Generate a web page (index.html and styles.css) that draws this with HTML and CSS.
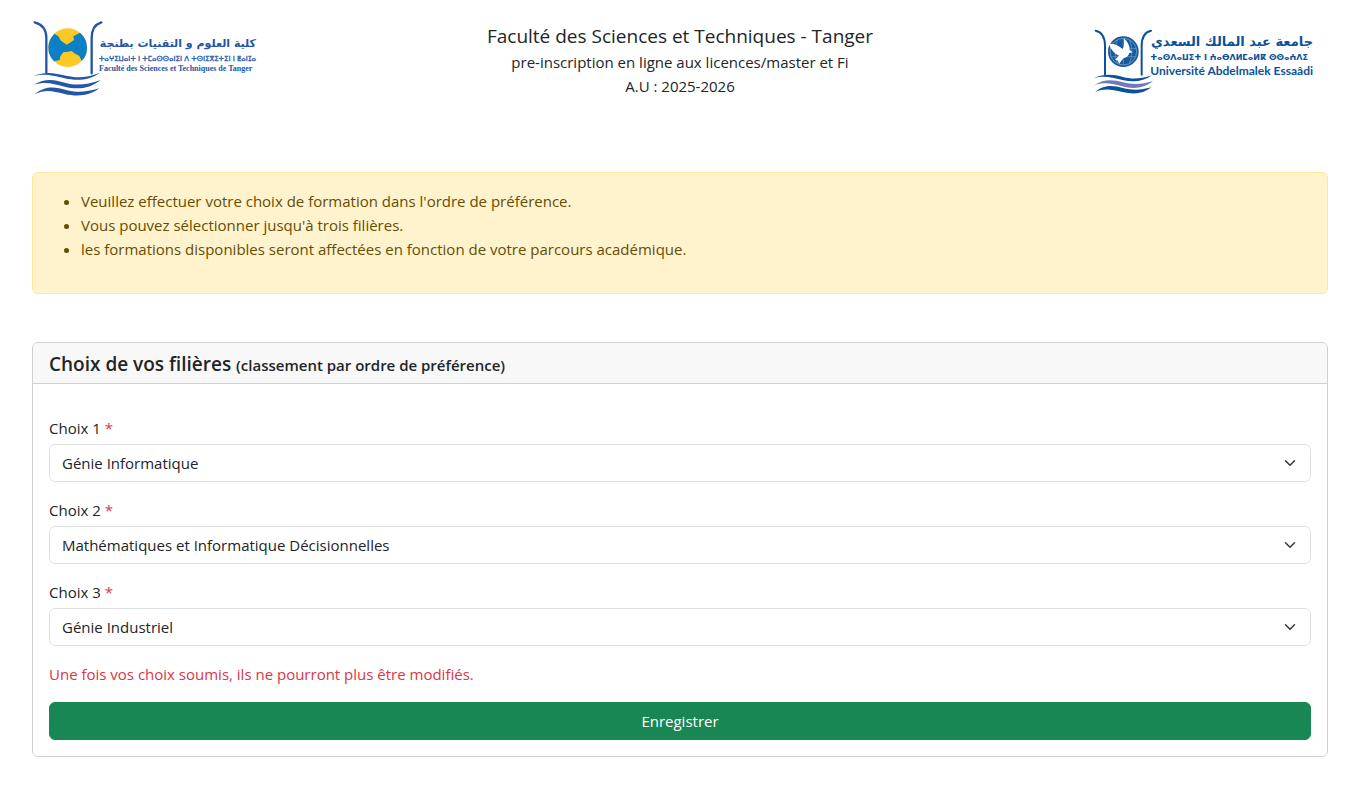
FILE: index.html
```html
<!DOCTYPE html>
<html lang="fr">
<head>
<meta charset="utf-8">
<meta name="viewport" content="width=device-width, initial-scale=1">
<title>Pré-inscription - FST Tanger</title>
<link rel="stylesheet" href="styles.css">
</head>
<body>
<header class="page-header">
  <div class="logo logo-fst">
    <svg class="mark-fst" viewBox="24 24 204 234" aria-hidden="true">
      <circle cx="131" cy="107" r="58" fill="#fbc926"/>
      <path d="M92 65 L103 73 L111 86 L128 98 L141 90 L150 84 L148 73 L168 62 Q189 80 189 107 Q189 132 173 147 L166 132 L151 124 L143 117 L132 119 L118 121 L109 133 L107 144 L91 148 Q73 132 73 107 Q73 82 92 65Z" fill="#0b80c4"/>
      <g fill="none" stroke="#2356a8" stroke-linecap="round">
        <path d="M32 31 Q67 40 67 78 V184" stroke-width="7"/>
        <path d="M232 31 Q203 40 203 78 V184" stroke-width="7"/>
      </g>
      <g fill="#2356a8">
        <path d="M29 192 C66 176 94 184 126 191 S188 198 228 182 C196 206 158 207 122 199 S66 184 29 192Z"/>
        <path d="M28 219 C66 196 94 204 126 213 S190 218 230 204 C196 232 158 233 122 224 S66 207 28 219Z"/>
        <path d="M32 247 C66 219 94 225 126 234 S188 240 226 229 C196 253 158 254 122 246 S66 231 32 247Z"/>
      </g>
    </svg>
    <div class="names-fst">
      <span class="fst-ar" lang="ar" dir="rtl">كلية العلوم و التقنيات بطنجة</span>
      <span class="fst-zgh" lang="zgh">ⵜⴰⵖⵉⵡⴰⵏⵜ ⵏ ⵜⵎⴰⵙⵙⴰⵏⵉⵏ ⴷ ⵜⵙⵏⵉⴳⵉⵜⵉⵏ ⵏ ⵟⴰⵏⵊⴰ</span>
      <span class="fst-fr">Faculté des Sciences et Techniques de Tanger</span>
    </div>
  </div>
  <div class="heading">
    <h1 class="heading-title">Faculté des Sciences et Techniques - Tanger</h1>
    <p class="heading-line">pre-inscription en ligne aux licences/master et Fi</p>
    <p class="heading-line">A.U : 2025-2026</p>
  </div>
  <div class="logo logo-uae">
    <svg class="mark-uae" viewBox="30 30 180 201" aria-hidden="true">
      <circle cx="121" cy="101" r="46" fill="#165a9f"/>
      <circle cx="121" cy="101" r="40" fill="none" stroke="#8fb4d6" stroke-width="2"/>
      <path d="M82 92 H160 M84 116 H158 M121 61 V141 M104 64 Q88 100 104 138 M139 64 Q154 100 139 138" fill="none" stroke="#6f9dca" stroke-width="2"/>
      <path d="M78 77 Q103 76 119 94 Q126 79 122 61 Q140 76 140 96 L149 103 L139 105 Q135 119 122 120 L108 138 L105 128 L96 125 L108 113 Q87 105 78 77Z" fill="#fff"/>
      <g fill="none" stroke="#0b529b" stroke-linecap="round">
        <path d="M38 38 Q66 44 66 84 V170" stroke-width="6"/>
        <path d="M204 38 Q176 44 176 84 V170" stroke-width="6"/>
      </g>
      <g fill="#0b529b">
        <path d="M33 180 C66 166 92 170 120 177 S172 183 207 172 C180 192 150 193 118 186 S66 172 33 180Z"/>
        <path fill="#7478bb" d="M33 202 C66 181 92 186 120 193 S176 200 210 189 C180 213 150 213 118 205 S66 191 33 202Z"/>
        <path d="M36 222 C66 198 92 203 120 210 S172 217 205 208 C180 229 150 229 118 222 S66 209 36 222Z"/>
      </g>
    </svg>
    <div class="names-uae">
      <span class="uae-ar" lang="ar" dir="rtl">جامعة عبد المالك السعدي</span>
      <span class="uae-zgh" lang="zgh">ⵜⴰⵙⴷⴰⵡⵉⵜ ⵏ ⵄⴰⴱⴷⵍⵎⴰⵍⴽ ⵙⵙⴰⵄⴷⵉ</span>
      <span class="uae-fr">Université Abdelmalek Essaâdi</span>
    </div>
  </div>
</header>
<main class="content">
  <div class="alert" role="alert">
    <ul class="alert-list">
      <li>Veuillez effectuer votre choix de formation dans l'ordre de préférence.</li>
      <li>Vous pouvez sélectionner jusqu'à trois filières.</li>
      <li>les formations disponibles seront affectées en fonction de votre parcours académique.</li>
    </ul>
  </div>
  <section class="card">
    <h2 class="card-header">Choix de vos filières <span class="card-note">(classement par ordre de préférence)</span></h2>
    <form class="card-body">
      <div class="field">
        <label for="choix1">Choix 1 <span class="required">*</span></label>
        <select class="select" id="choix1" required><option>Génie Informatique</option></select>
      </div>
      <div class="field">
        <label for="choix2">Choix 2 <span class="required">*</span></label>
        <select class="select" id="choix2" required><option>Mathématiques et Informatique Décisionnelles</option></select>
      </div>
      <div class="field">
        <label for="choix3">Choix 3 <span class="required">*</span></label>
        <select class="select" id="choix3" required><option>Génie Industriel</option></select>
      </div>
      <p class="warning">Une fois vos choix soumis, ils ne pourront plus être modifiés.</p>
      <button class="submit" type="submit">Enregistrer</button>
    </form>
  </section>
</main>
</body>
</html>
```
FILE: styles.css
```css
* { box-sizing: border-box; }

body {
  margin: 0;
  padding: 20px 31px 32px 32px;
  background: #fff;
  color: #212529;
  font: 15px/24px "Segoe UI", "Open Sans", "Noto Sans", sans-serif;
}

h1, h2, p { margin: 0; }

.page-header {
  display: grid;
  grid-template-columns: 1fr auto 1fr;
  align-items: start;
  margin-bottom: 74px;
}

.logo { display: flex; align-items: flex-start; white-space: nowrap; }
.logo-fst { color: #2356a8; }
.logo-uae { color: #0b529b; justify-self: end; padding-top: 8px; margin-right: 15px; }
.mark-fst { width: 68px; height: 78px; overflow: visible; }
.mark-uae { width: 60px; height: 67px; overflow: visible; }

.names-fst, .names-uae { display: flex; flex-direction: column; }
.names-fst { padding-top: 14px; margin-left: -1px; }
.names-uae { padding-top: 4px; margin-left: -3px; }

.fst-ar { font: bold 11px/20px "DejaVu Sans", sans-serif; }
.fst-zgh { font: 7px/10px "DejaVu Sans", sans-serif; -webkit-text-stroke: 0.3px; }
.fst-fr { font: bold 8px/10px "Liberation Serif", serif; }
.uae-ar { font: bold 13px/19px "DejaVu Sans", sans-serif; }
.uae-zgh { font: bold 8px/14px "DejaVu Sans", sans-serif; }
.uae-fr { font: bold 12px/12px Lato, sans-serif; }

.heading { padding-top: 2px; text-align: center; }
.heading-title { font-size: 19px; font-weight: 400; line-height: 28px; }

.alert {
  margin-bottom: 48px;
  padding: 16px;
  border: 1px solid #ffe69c;
  border-radius: 6px;
  background: #fff3cd;
  color: #664d03;
}
.alert-list { margin: 0 0 16px; padding-left: 32px; }

.card { border: 1px solid #d0d0d1; border-radius: 6px; overflow: hidden; }
.card-header {
  padding: 9px 16px 7px;
  border-bottom: 1px solid #d0d0d1;
  background: #f8f8f8;
  font-size: 19px;
  font-weight: 600;
  line-height: 24px;
}
.card-note { font-size: 15px; line-height: 16px; }
.card-body {
  display: flex;
  flex-direction: column;
  gap: 16px;
  padding: 32px 16px 16px;
}

.field { display: flex; flex-direction: column; gap: 4px; }
.required, .warning { color: #dc3545; }

.select {
  appearance: none;
  width: 100%;
  padding: 6px 36px 6px 12px;
  border: 1px solid #dee2e6;
  border-radius: 6px;
  background: #fff url("data:image/svg+xml,%3csvg xmlns='http://www.w3.org/2000/svg' viewBox='0 0 16 16'%3e%3cpath fill='none' stroke='%23343a40' stroke-linecap='round' stroke-linejoin='round' stroke-width='2' d='m2 5 6 6 6-6'/%3e%3c/svg%3e") no-repeat right 12px center / 16px 12px;
  color: #212529;
  font: inherit;
}

.submit {
  padding: 6px 12px;
  border: 1px solid #198754;
  border-radius: 6px;
  background: #198754;
  color: #fff;
  font: inherit;
}
```
